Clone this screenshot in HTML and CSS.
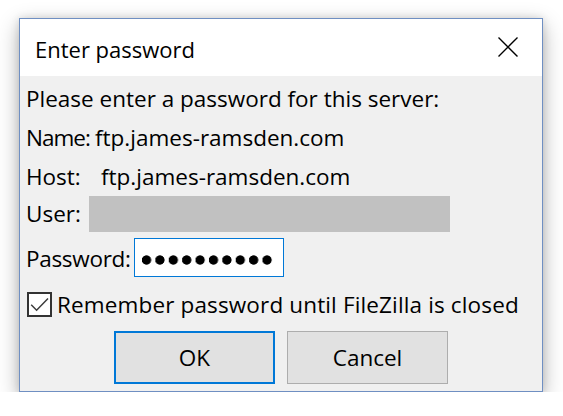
FILE: index.html
```html
<!DOCTYPE html>
<html lang="en">
<head>
<meta charset="utf-8">
<title>Enter password</title>
<link rel="stylesheet" href="styles.css">
</head>
<body>
<div class="window">
  <div class="titlebar">
    <span class="title">Enter password</span>
    <svg class="close" width="20" height="20" viewBox="0 0 20 20" aria-label="Close">
      <path d="M0.5 0.5 L19.5 19.5 M19.5 0.5 L0.5 19.5" stroke="#000" stroke-width="1.4" fill="none"/>
    </svg>
  </div>
  <div class="content">
    <div class="line">Please enter a password for this server:</div>
    <div class="line row">
      <span class="label label-name">Name:</span>
      <span class="value">ftp.james-ramsden.com</span>
    </div>
    <div class="line row">
      <span class="label label-host">Host:</span>
      <span class="value">ftp.james-ramsden.com</span>
    </div>
    <div class="row user-row">
      <span class="label label-user">User:</span>
      <div class="redacted"></div>
    </div>
    <div class="row pass-row">
      <span class="label label-pass">Password:</span>
      <div class="pass-input"><span class="dots"></span></div>
    </div>
    <div class="row check-row">
      <span class="checkbox">
        <svg width="21" height="21" viewBox="0 0 21 21">
          <path d="M2.2 10.8 L7.6 16.2 L19 4.4" stroke="#3c3c3c" stroke-width="1.5" fill="none"/>
        </svg>
      </span>
      <span class="check-label">Remember password until FileZilla is closed</span>
    </div>
    <div class="buttons">
      <button class="btn btn-default">OK</button>
      <button class="btn">Cancel</button>
    </div>
  </div>
</div>
</body>
</html>
```
FILE: styles.css
```css
* { box-sizing: border-box; }
html, body { margin: 0; padding: 0; background: #ffffff; }
body {
  font-family: "Open Sans", "Noto Sans", sans-serif;
  font-size: 22.5px;
  color: #000;
}
.window {
  margin: 18px 0 0 19px;
  width: 524px;
  height: 374px;
  border: 1px solid #6f8fc2;
  background: #f0f0f0;
  box-shadow: 0 7px 20px rgba(0, 0, 0, 0.3), 0 0 8px rgba(0, 0, 0, 0.12);
  display: flex;
  flex-direction: column;
}
.titlebar {
  height: 57px;
  background: #ffffff;
  display: flex;
  align-items: center;
  justify-content: space-between;
  padding: 0 24px 0 15px;
}
.title {
  font-size: 22px;
  line-height: 30px;
  padding-top: 2px;
}
.close { display: block; margin-top: -1px; }
.content {
  flex: 1;
  padding: 3px 6px 0 6px;
  display: flex;
  flex-direction: column;
}
.line { height: 39px; line-height: 39px; white-space: nowrap; }
.row { display: flex; align-items: center; white-space: nowrap; }
.label { display: inline-block; flex: none; }
.label-name { width: 69px; letter-spacing: -1px; }
.value-name { margin-left: 0; }
.label-host { width: 75px; }
.label-user { width: 63px; }
.label-pass { width: 108px; letter-spacing: -0.3px; }
.user-row { height: 36px; line-height: 36px; }
.redacted {
  width: 361px;
  height: 36px;
  background: #c1c1c1;
}
.pass-row { margin-top: 6px; height: 39px; }
.pass-row .label { line-height: 39px; padding-top: 1px; }
.pass-input {
  width: 150px;
  height: 39px;
  background: #ffffff;
  border: 1px solid #0078d7;
  padding: 0 7px;
  display: flex;
  align-items: center;
}
.dots {
  display: block;
  width: 132px;
  height: 10px;
  margin-top: 4px;
  background: radial-gradient(circle at 4.5px 5px, #000 4.3px, rgba(0,0,0,0) 5px) 0 0 / 13.4px 10px repeat-x;
}
.check-row { margin-top: 8px; height: 38px; line-height: 38px; padding-left: 1px; }
.checkbox {
  width: 25px;
  height: 25px;
  border: 2px solid #333333;
  background: #ffffff;
  display: flex;
  align-items: center;
  justify-content: center;
}
.checkbox svg { display: block; }
.check-label { margin-left: 5px; letter-spacing: 0.14px; padding-top: 2px; }
.buttons {
  margin-top: 8px;
  display: flex;
  justify-content: center;
  gap: 12px;
}
.btn {
  width: 161px;
  height: 53px;
  font-family: inherit;
  font-size: 22.5px;
  color: #000;
  background: #e1e1e1;
  border: 1px solid #adadad;
  padding: 0;
  margin: 0;
}
.btn-default { border: 2px solid #0078d7; }
```
